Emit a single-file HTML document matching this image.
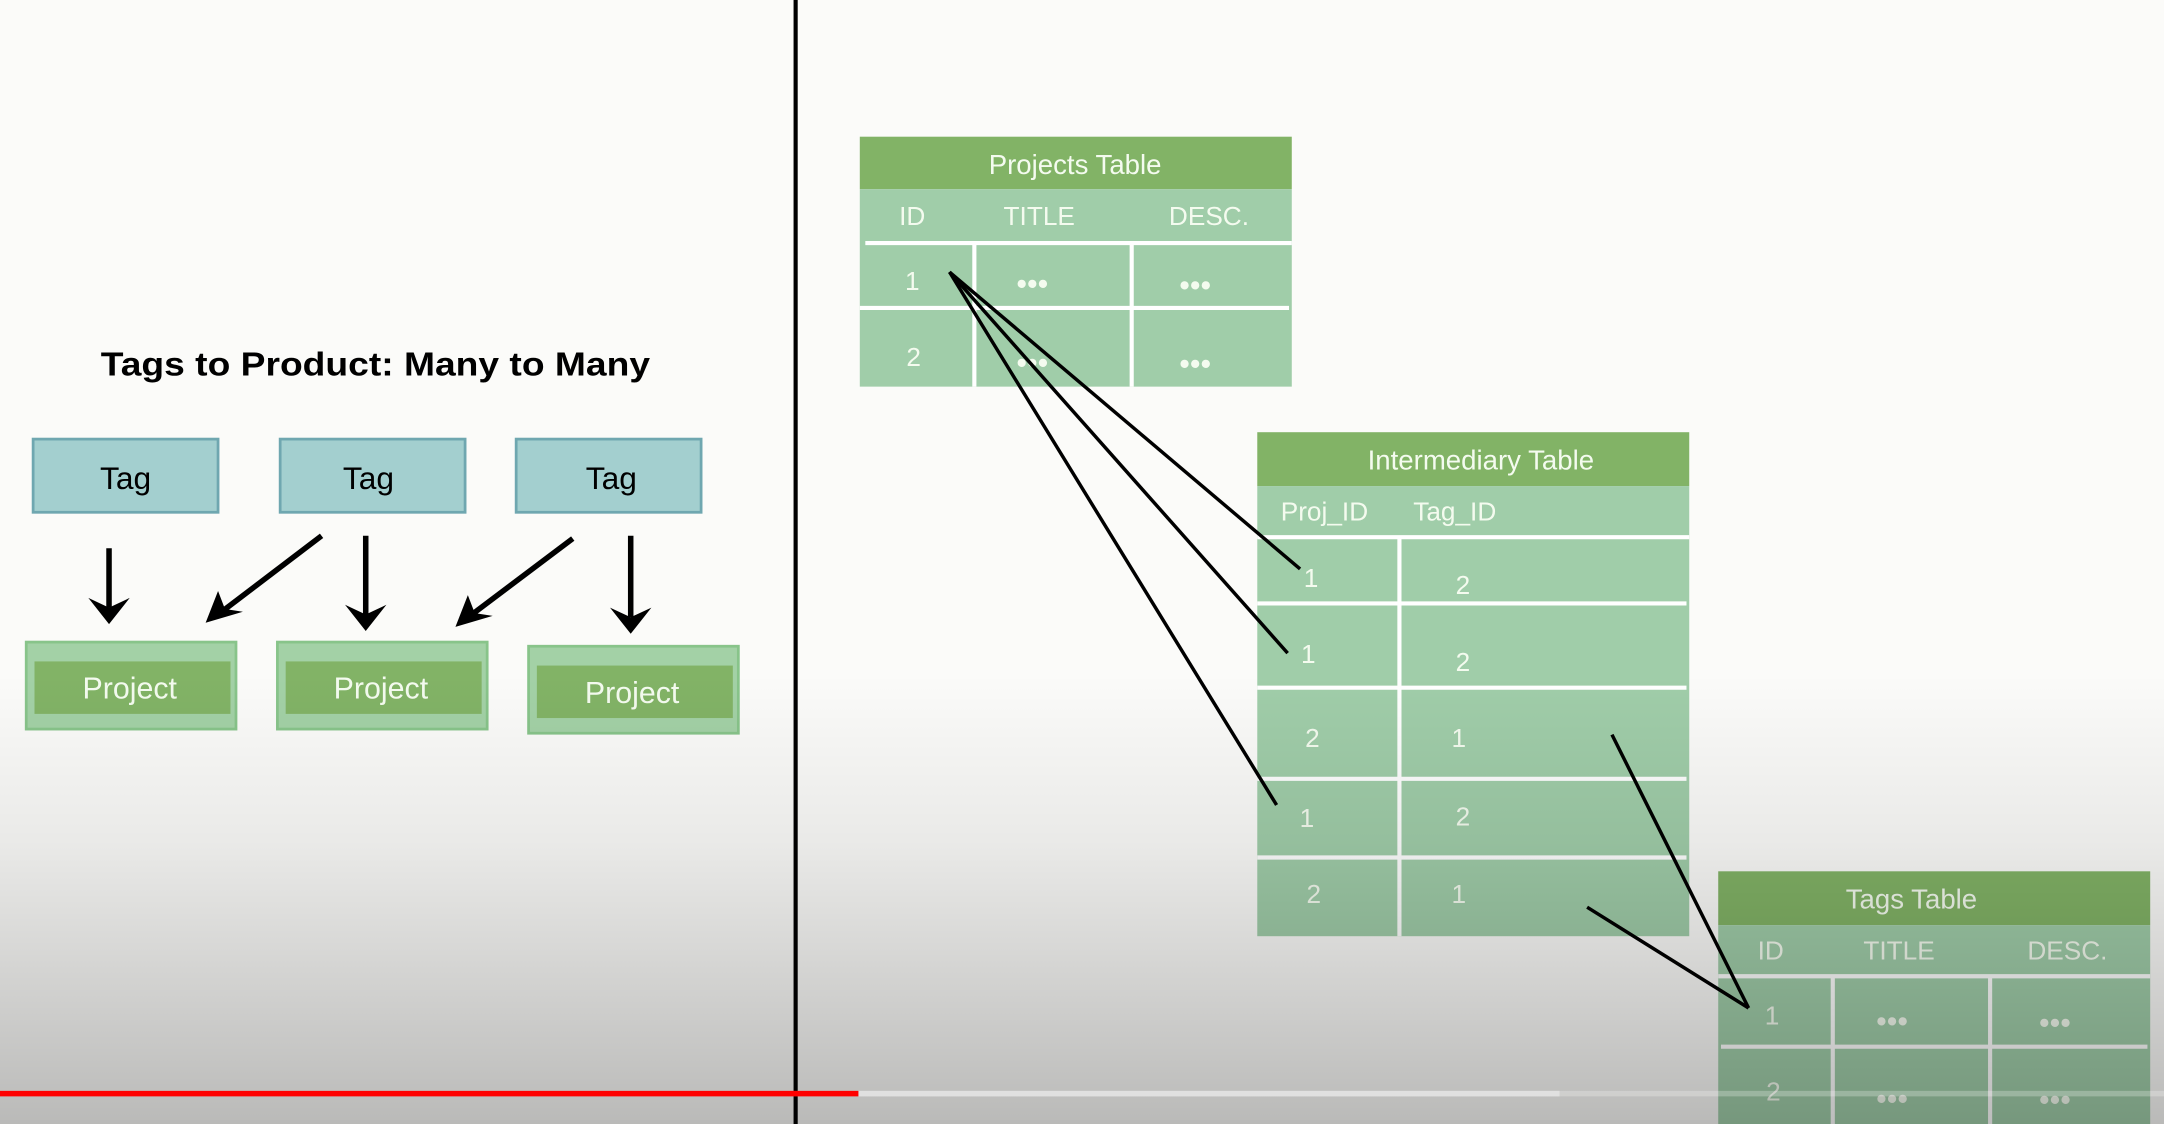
<!DOCTYPE html>
<html><head><meta charset="utf-8"><style>
html,body{margin:0;padding:0;width:2164px;height:1124px;overflow:hidden;background:#fbfbf9}
svg{display:block}
text{font-family:"Liberation Sans",sans-serif}
</style></head><body>
<svg width="2164" height="1124" viewBox="0 0 1568 814" preserveAspectRatio="none" xmlns="http://www.w3.org/2000/svg">
<defs>
<linearGradient id="sh" x1="0" y1="0" x2="0" y2="814" gradientUnits="userSpaceOnUse">
<stop offset="0" stop-color="#000" stop-opacity="0"/>
<stop offset="0.6" stop-color="#000" stop-opacity="0"/>
<stop offset="0.75" stop-color="#000" stop-opacity="0.07"/>
<stop offset="1" stop-color="#000" stop-opacity="0.26"/>
</linearGradient>
</defs>
<rect width="1568" height="814" fill="#fbfbf9"/>

<!-- left -->
<text x="272" y="272" font-size="24" font-weight="bold" text-anchor="middle" textLength="398" lengthAdjust="spacingAndGlyphs" fill="#000">Tags to Product: Many to Many</text>
<g fill="#a3cfcf" stroke="#6fa7b0" stroke-width="2">
<rect x="24" y="318" width="134" height="53"/>
<rect x="203" y="318" width="134" height="53"/>
<rect x="374" y="318" width="134" height="53"/>
</g>
<g font-size="23" text-anchor="middle" fill="#000">
<text x="91" y="354">Tag</text><text x="267" y="354">Tag</text><text x="443" y="354">Tag</text>
</g>
<g fill="#a3d1a6" stroke="#88c48a" stroke-width="2">
<rect x="19" y="465" width="152" height="63"/>
<rect x="201" y="465" width="152" height="63"/>
<rect x="383" y="468" width="152" height="63"/>
</g>
<g fill="#82b366">
<rect x="25" y="479" width="142" height="38"/>
<rect x="207" y="479" width="142" height="38"/>
<rect x="389" y="482" width="142" height="38"/>
</g>
<g font-size="22" text-anchor="middle" fill="#f4fbef">
<text x="94" y="506">Project</text><text x="276" y="506">Project</text><text x="458" y="509">Project</text>
</g>
<g stroke="#000" stroke-width="4" fill="none">
<line x1="79" y1="397" x2="79" y2="440"/>
<line x1="265" y1="388" x2="265" y2="445"/>
<line x1="457" y1="388" x2="457" y2="447"/>
<line x1="233" y1="388" x2="162" y2="442"/>
<line x1="415" y1="390" x2="342" y2="445"/>
</g>
<g fill="#000">
<path d="M64 433 L79 452 L94 433 L79 440Z"/>
<path d="M250 438 L265 457 L280 438 L265 445Z"/>
<path d="M442 440 L457 459 L472 440 L457 447Z"/>
<path d="M149 451 L158 428 L163 441 L176 443Z"/>
<path d="M330 454 L339 431 L344 444 L357 446Z"/>
</g>
<rect x="575" y="0" width="3" height="814" fill="#000"/>

<!-- Projects table -->
<rect x="623" y="99" width="313" height="38" fill="#82b366"/>
<rect x="623" y="137" width="313" height="143" fill="#a0cda9"/>
<g fill="#f4fbef" text-anchor="middle">
<text x="779" y="126" font-size="20">Projects Table</text>
<text x="661" y="163" font-size="19">ID</text><text x="753" y="163" font-size="19">TITLE</text><text x="876" y="163" font-size="19">DESC.</text>
<text x="661" y="210" font-size="19">1</text><text x="662" y="265" font-size="19">2</text>
<text x="748" y="213" font-size="22">•••</text><text x="866" y="214" font-size="22">•••</text>
<text x="748" y="270" font-size="22">•••</text><text x="866" y="271" font-size="22">•••</text>
</g>
<g stroke="#fff" stroke-width="3">
<line x1="627" y1="176" x2="936" y2="176"/><line x1="623" y1="223" x2="934" y2="223"/>
<line x1="706" y1="176" x2="706" y2="280"/><line x1="820" y1="176" x2="820" y2="280"/>
</g>

<!-- Intermediary -->
<rect x="911" y="313" width="313" height="39" fill="#82b366"/>
<rect x="911" y="352" width="313" height="326" fill="#a0cda9"/>
<g fill="#f4fbef">
<text x="1073" y="340" font-size="20" text-anchor="middle">Intermediary Table</text>
<text x="928" y="377" font-size="19">Proj_ID</text><text x="1024" y="377" font-size="19">Tag_ID</text>
<g font-size="19" text-anchor="middle">
<text x="950" y="425">1</text><text x="1060" y="430">2</text>
<text x="948" y="480">1</text><text x="1060" y="486">2</text>
<text x="951" y="541">2</text><text x="1057" y="541">1</text>
<text x="947" y="599">1</text><text x="1060" y="598">2</text>
<text x="952" y="654">2</text><text x="1057" y="654">1</text>
</g></g>
<g stroke="#fff" stroke-width="3">
<line x1="911" y1="389" x2="1224" y2="389"/><line x1="911" y1="437" x2="1222" y2="437"/>
<line x1="911" y1="498" x2="1222" y2="498"/><line x1="911" y1="564" x2="1222" y2="564"/>
<line x1="911" y1="621" x2="1222" y2="621"/><line x1="1014" y1="389" x2="1014" y2="678"/>
</g>

<!-- Tags table -->
<rect x="1245" y="631" width="313" height="39" fill="#82b366"/>
<rect x="1245" y="670" width="313" height="144" fill="#a0cda9"/>
<g fill="#f4fbef" text-anchor="middle">
<text x="1385" y="658" font-size="20">Tags Table</text>
<text x="1283" y="695" font-size="19">ID</text><text x="1376" y="695" font-size="19">TITLE</text><text x="1498" y="695" font-size="19">DESC.</text>
<text x="1284" y="742" font-size="19">1</text><text x="1285" y="797" font-size="19">2</text>
<text x="1371" y="747" font-size="22">•••</text><text x="1489" y="748" font-size="22">•••</text>
<text x="1371" y="803" font-size="22">•••</text><text x="1489" y="804" font-size="22">•••</text>
</g>
<g stroke="#fff" stroke-width="3">
<line x1="1245" y1="707" x2="1558" y2="707"/><line x1="1247" y1="758" x2="1556" y2="758"/>
<line x1="1328" y1="707" x2="1328" y2="814"/><line x1="1442" y1="707" x2="1442" y2="814"/>
</g>

<!-- connector lines -->
<g stroke="#000" stroke-width="2.5" fill="none">
<line x1="688" y1="197" x2="942" y2="412"/>
<line x1="688" y1="197" x2="933" y2="473"/>
<line x1="688" y1="197" x2="925" y2="583"/>
<line x1="1168" y1="532" x2="1267" y2="730"/>
<line x1="1150" y1="657" x2="1267" y2="730"/>
</g>

<rect width="1568" height="814" fill="url(#sh)"/>
<!-- progress -->
<rect x="0" y="790" width="1568" height="4" fill="#fff" fill-opacity="0.25"/>
<rect x="622" y="790" width="508" height="4" fill="#e0e0e0"/>
<rect x="0" y="790" width="622" height="4" fill="#ff0000"/>
</svg>
</body></html>
